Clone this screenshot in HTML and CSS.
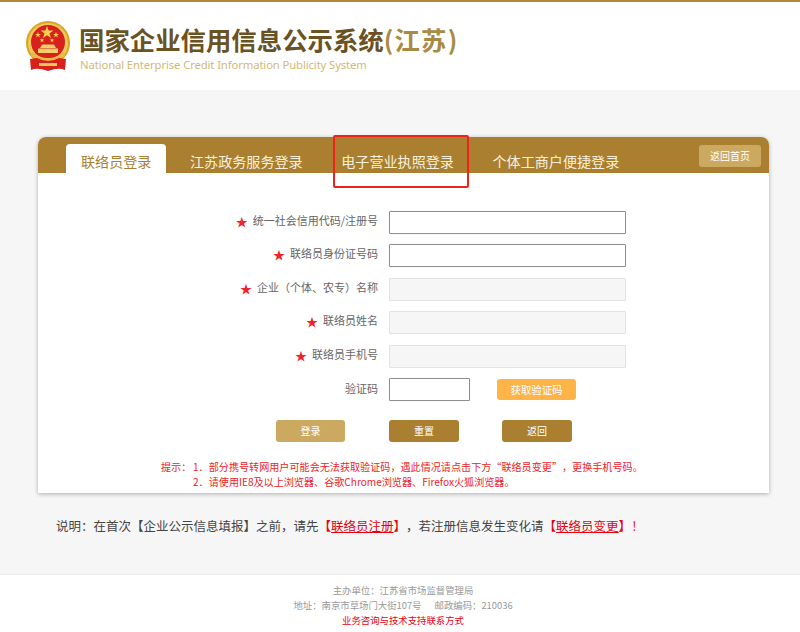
FILE: index.html
```html
<!DOCTYPE html>
<html lang="zh-CN">
<head>
    <meta charset="UTF-8">
    <meta name="viewport" content="width=device-width, initial-scale=1.0">
    <title>国家企业信用信息公示系统(江苏)</title>
    <link rel="stylesheet" href="styles.css">
</head>
<body>
    <header class="site-header">
        <svg class="emblem" width="46" height="50" viewBox="0 0 46 50" aria-hidden="true">
            <circle cx="23" cy="22" r="22" fill="#d9a521"/>
            <circle cx="23" cy="22" r="20" fill="#efc75a"/>
            <circle cx="23" cy="21" r="17" fill="#d8201c"/>
            <polygon points="22,5 23.6,9.6 28.4,9.6 24.5,12.4 26,17 22,14.2 18,17 19.5,12.4 15.6,9.6 20.4,9.6" fill="#f6d24e"/>
            <polygon points="13,11 13.8,13 16,13 14.2,14.3 14.9,16.4 13,15.1 11.1,16.4 11.8,14.3 10,13 12.2,13" fill="#f6d24e"/>
            <polygon points="31,11 31.8,13 34,13 32.2,14.3 32.9,16.4 31,15.1 29.1,16.4 29.8,14.3 28,13 30.2,13" fill="#f6d24e"/>
            <polygon points="17,17 17.6,18.6 19.4,18.6 18,19.6 18.5,21.3 17,20.3 15.5,21.3 16,19.6 14.6,18.6 16.4,18.6" fill="#f6d24e"/>
            <polygon points="27,17 27.6,18.6 29.4,18.6 28,19.6 28.5,21.3 27,20.3 25.5,21.3 26,19.6 24.6,18.6 26.4,18.6" fill="#f6d24e"/>
            <path d="M15 27 L17 23.5 H29 L31 27 Z M13 27.5 H33 V32 H13 Z" fill="#f3cf6a"/>
            <path d="M7 31 Q23 43 39 31 L40 35 Q23 47 6 35 Z" fill="#e9bb45"/>
            <path d="M5 38 L12 37 Q23 43 34 37 L41 38 L40 49 Q34 46 23 50 Q12 46 6 49 Z" fill="#d8201c"/>
            <path d="M14 42 H32 V45 H14 Z" fill="#efc75a"/>
        </svg>
        <div class="brand">
            <div class="brand-title">国家企业信用信息公示系统<span class="brand-area">(江苏)</span></div>
            <div class="brand-sub">National Enterprise Credit Information Publicity System</div>
        </div>
    </header>

    <main class="main">
        <section class="login-card">
            <div class="tab-bar">
                <a class="tab tab-active">联络员登录</a>
                <a class="tab">江苏政务服务登录</a>
                <a class="tab">电子营业执照登录</a>
                <a class="tab">个体工商户便捷登录</a>
                <a class="home-btn">返回首页</a>
                <div class="tab-highlight"></div>
            </div>
            <form class="login-form">
                <div class="form-row">
                    <label class="form-label"><span class="req">★</span>统一社会信用代码/注册号</label>
                    <input class="field" type="text">
                </div>
                <div class="form-row">
                    <label class="form-label"><span class="req">★</span>联络员身份证号码</label>
                    <input class="field" type="text">
                </div>
                <div class="form-row">
                    <label class="form-label"><span class="req">★</span>企业（个体、农专）名称</label>
                    <input class="field field-off" type="text" disabled>
                </div>
                <div class="form-row">
                    <label class="form-label"><span class="req">★</span>联络员姓名</label>
                    <input class="field field-off" type="text" disabled>
                </div>
                <div class="form-row">
                    <label class="form-label"><span class="req">★</span>联络员手机号</label>
                    <input class="field field-off" type="text" disabled>
                </div>
                <div class="form-row">
                    <label class="form-label">验证码</label>
                    <input class="field field-code" type="text">
                    <button class="btn-code" type="button">获取验证码</button>
                </div>
                <div class="form-actions">
                    <button class="btn btn-light" type="button">登录</button>
                    <button class="btn" type="button">重置</button>
                    <button class="btn" type="button">返回</button>
                </div>
                <div class="tips">
                    <div class="tip-line"><span class="tip-head">提示：</span><span>1．部分携号转网用户可能会无法获取验证码，遇此情况请点击下方“联络员变更”，更换手机号码。</span></div>
                    <div class="tip-line"><span class="tip-head"></span><span>2．请使用IE8及以上浏览器、谷歌Chrome浏览器、Firefox火狐浏览器。</span></div>
                </div>
            </form>
        </section>
        <p class="notice">说明：在首次【企业公示信息填报】之前，请先<span class="red">【<a class="red-link">联络员注册</a>】</span>，若注册信息发生变化请<span class="red">【<a class="red-link">联络员变更</a>】</span><span class="red-soft">！</span></p>
    </main>

    <footer class="site-footer">
        <div>主办单位：江苏省市场监督管理局</div>
        <div>地址：南京市草场门大街107号<span class="footer-gap"></span>邮政编码：210036</div>
        <div class="footer-link">业务咨询与技术支持联系方式</div>
    </footer>
</body>
</html>
```

FILE: styles.css
```css
* {
    box-sizing: border-box;
}

html, body {
    margin: 0;
    height: 632px;
    overflow: hidden;
}

body {
    font-family: "Noto Sans CJK SC", "Noto Sans", sans-serif;
    background-color: #f6f6f6;
    color: #555;
    text-spacing-trim: space-all;
}

.site-header {
    height: 90px;
    background: #fff;
    border-top: 2px solid #b08a3c;
    display: flex;
    align-items: flex-start;
    padding: 19px 0 0 25px;
}

.emblem {
    flex: none;
    margin-right: 8px;
}

.brand-title {
    font-size: 25.4px;
    font-weight: 700;
    line-height: 36px;
    color: #6a5222;
    white-space: nowrap;
}

.brand-area {
    color: #a98a45;
    font-size: 25.4px;
    letter-spacing: 1.2px;
}

.brand-sub {
    font-family: "Noto Sans", sans-serif;
    font-size: 11.3px;
    line-height: 14px;
    color: #d3b878;
    margin-top: 1px;
    margin-left: 1px;
    letter-spacing: -0.12px;
    white-space: nowrap;
}

.main {
    height: 484px;
    padding: 47px 0 0 38px;
}

.login-card {
    width: 731px;
    height: 356px;
    background: #fff;
    border-radius: 8px 8px 0 0;
    box-shadow: 0 1px 4px rgba(0,0,0,0.3);
}

.tab-bar {
    position: relative;
    height: 36px;
    background: #aa8030;
    border-radius: 8px 8px 0 0;
    display: flex;
    align-items: flex-end;
    gap: 8.5px;
    padding-left: 28px;
}

.tab {
    height: 29px;
    line-height: 35px;
    padding: 0 15px;
    font-size: 14.1px;
    color: #f8f0de;
    white-space: nowrap;
}

.tab-active {
    background: #fff;
    color: #aa8030;
    border-radius: 4px 4px 0 0;
}

.home-btn {
    position: absolute;
    top: 8px;
    right: 8px;
    width: 62px;
    height: 22px;
    line-height: 22px;
    text-align: center;
    font-size: 10px;
    color: #fff;
    background: #cca960;
    border-radius: 3px;
}

.tab-highlight {
    position: absolute;
    left: 295px;
    top: -2px;
    width: 136px;
    height: 53px;
    border: 2px solid #f0231c;
    border-radius: 2px;
}

.login-form {
    padding-top: 37.9px;
}

.form-row {
    display: flex;
    align-items: center;
    height: 23px;
    margin-bottom: 10.5px;
}

.form-label {
    width: 340px;
    margin-top: -3px;
    text-align: right;
    font-size: 11px;
    color: #666;
    white-space: nowrap;
}

.req {
    color: #f0232a;
    font-size: 12px;
    margin-right: 5px;
    vertical-align: -2px;
}

.field {
    width: 237px;
    height: 23px;
    margin-left: 11px;
    padding: 2px 4px;
    background: #fff;
    border: 1px solid #8f8f8f;
    border-radius: 1px;
    box-shadow: 0 0 1px #ccc;
}

.field-off {
    background: #f6f6f6;
    border-color: #e3e3e3;
    box-shadow: none;
}

.field-code {
    width: 81px;
}

.btn-code {
    width: 79px;
    height: 21px;
    margin-left: 27px;
    padding: 0;
    font-family: inherit;
    font-size: 10.4px;
    color: #fff;
    background: #feb447;
    border: none;
    border-radius: 3px;
}

.form-actions {
    display: flex;
    padding: 8.1px 0 0 238px;
    margin-bottom: 17px;
}

.btn {
    width: 70px;
    height: 22px;
    margin-right: 43px;
    padding: 0;
    font-family: inherit;
    font-size: 10px;
    color: #fff;
    background: #aa8030;
    border: none;
    border-radius: 3px;
}

.btn-light {
    width: 69px;
    margin-right: 44px;
    background: #cca960;
}

.tips {
    padding-left: 123px;
    font-size: 10.1px;
    line-height: 15px;
    color: #f0232a;
}

.tip-line {
    display: flex;
    white-space: nowrap;
}

.tip-head {
    width: 32px;
    flex: none;
}

.notice {
    margin: 24px 0 0 18px;
    font-size: 12.5px;
    line-height: 18px;
    color: #444;
    white-space: nowrap;
}

.red {
    color: #e8000d;
}

.red-soft {
    color: #f0232a;
}

.red-link {
    color: #e8000d;
    text-decoration: underline;
}

.site-footer {
    height: 58px;
    background: #fff;
    border-top: 1px solid #ececec;
    padding: 8px 0 0 6px;
    text-align: center;
    font-size: 9.4px;
    line-height: 15px;
    color: #999;
}

.footer-gap {
    display: inline-block;
    width: 13px;
}

.footer-link {
    color: #e8000d;
}
```
